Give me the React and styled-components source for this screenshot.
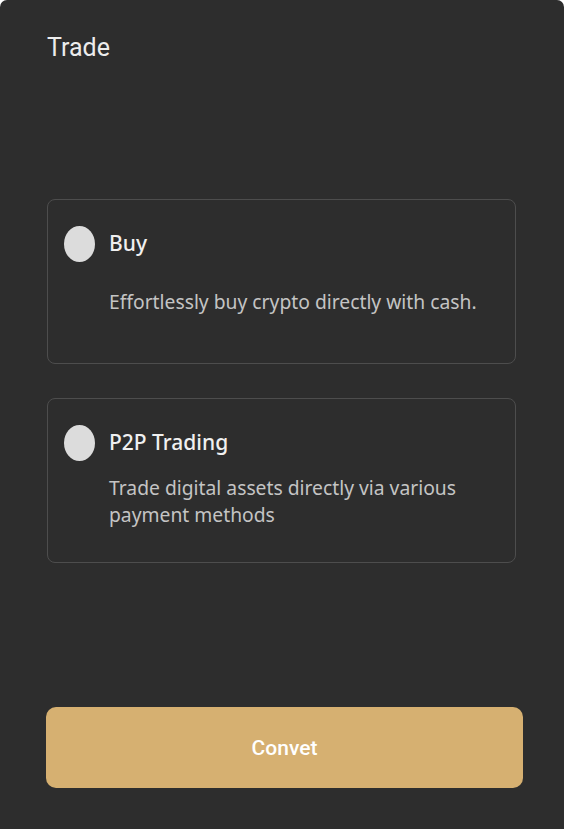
import React from 'react';
import styled, { createGlobalStyle } from 'styled-components';

const GlobalStyle = createGlobalStyle`
    html, body {
        margin: 0;
        padding: 0;
        background: #ffffff;
    }
    * {
        box-sizing: border-box;
    }
`;

const Sheet = styled.div`
    width: 564px;
    height: 829px;
    background: #2d2d2d;
    border-radius: 7px 7px 0 0;
    padding: 33px 41px 41px 46px;
    display: flex;
    flex-direction: column;
    font-family: "Noto Sans", "Liberation Sans", sans-serif;
`;

const Title = styled.h1`
    margin: 0;
    padding-left: 1px;
    font-family: Roboto, "Liberation Sans", sans-serif;
    font-size: 25px;
    font-weight: 400;
    line-height: 30px;
    color: #ececec;
`;

const Options = styled.div`
    display: flex;
    flex-direction: column;
    gap: 34px;
    margin-top: 136px;
    padding-right: 7px;
`;

const OptionCard = styled.div`
    height: 165px;
    margin-left: 1px;
    border: 1.5px solid #4d4d4d;
    border-radius: 8px;
    padding: 26px 16px 0 16px;
    display: flex;
    gap: 14px;
`;

const Radio = styled.div`
    flex-shrink: 0;
    width: 31px;
    height: 36px;
    border-radius: 50%;
    background: ${props => (props.$checked ? '#d6b071' : '#dcdcdc')};
`;

const OptionBody = styled.div`
    display: flex;
    flex-direction: column;
`;

const OptionName = styled.div`
    font-size: 21px;
    line-height: 34px;
    font-weight: 500;
    color: #f0f0f0;
`;

const OptionText = styled.div`
    margin-top: ${props => props.$gap}px;
    font-size: 19.3px;
    line-height: 27px;
    color: #c4c4c4;
    max-width: 380px;
`;

const ConvertButton = styled.button`
    margin-top: auto;
    height: 81px;
    border: none;
    border-radius: 10px;
    background: #d6b071;
    color: #ffffff;
    font-family: Roboto, "Liberation Sans", sans-serif;
    font-size: 21px;
    font-weight: 500;
    cursor: pointer;
`;

const options = [
    { name: 'Buy', text: 'Effortlessly buy crypto directly with cash.', gap: 28 },
    { name: 'P2P Trading', text: 'Trade digital assets directly via various payment methods', gap: 15 },
];

export default function App() {
    return (
        <>
            <GlobalStyle />
            <Sheet>
                <Title>Trade</Title>
                <Options>
                    {options.map(o => (
                        <OptionCard key={o.name}>
                            <Radio />
                            <OptionBody>
                                <OptionName>{o.name}</OptionName>
                                <OptionText $gap={o.gap}>{o.text}</OptionText>
                            </OptionBody>
                        </OptionCard>
                    ))}
                </Options>
                <ConvertButton>Convet</ConvertButton>
            </Sheet>
        </>
    );
}
